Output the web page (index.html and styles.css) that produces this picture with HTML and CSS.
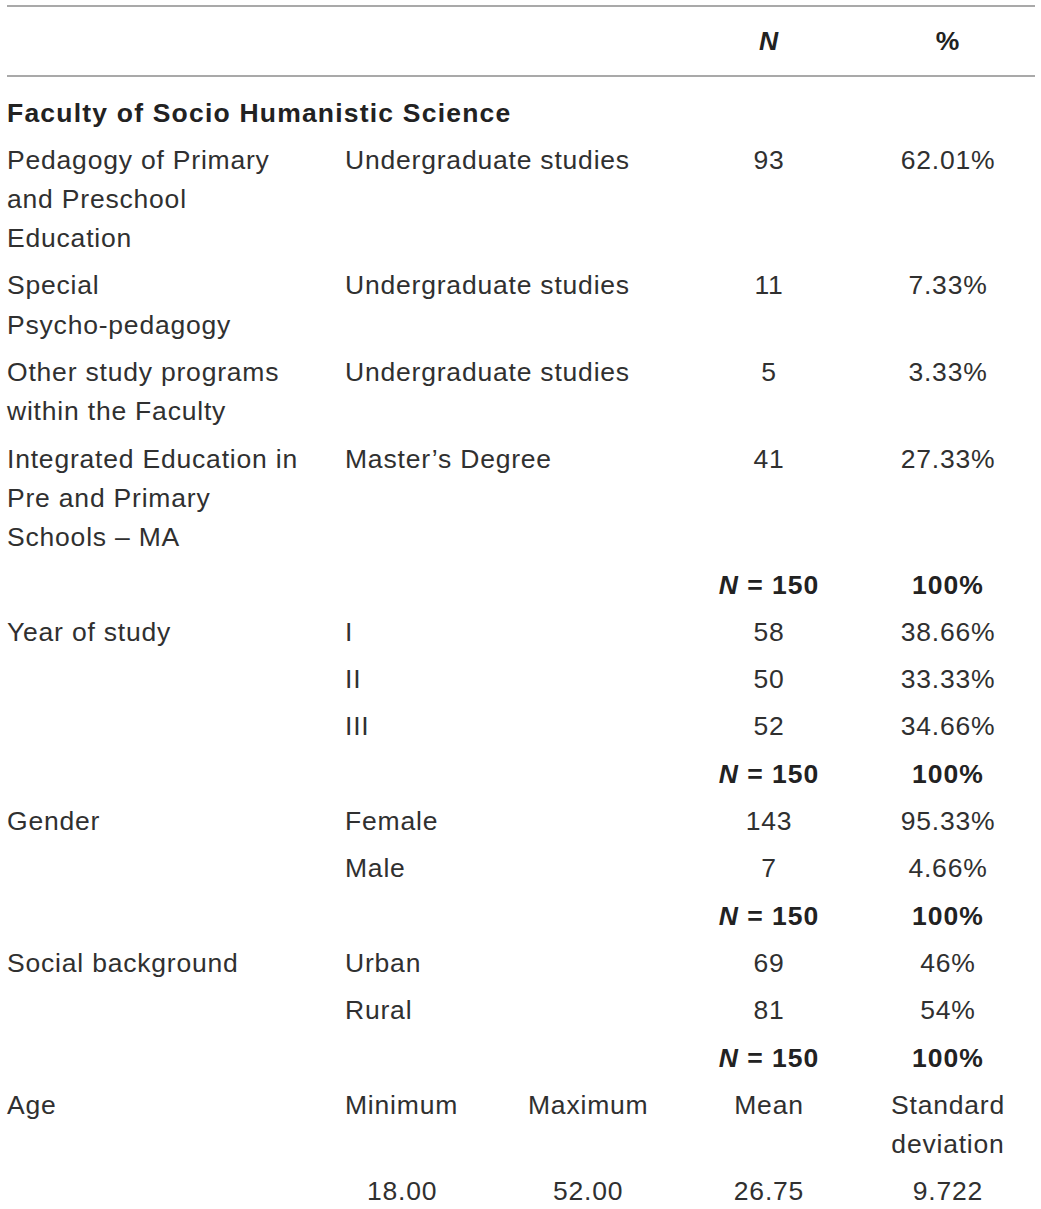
FILE: index.html
```html
<!DOCTYPE html>
<html lang="en">
<head>
<meta charset="utf-8">
<title>Sample characteristics</title>
<link rel="stylesheet" href="styles.css">
</head>
<body>
<div class="wrap">
<table class="stats">
  <colgroup>
    <col class="c1"><col class="c2"><col class="c3"><col class="c4"><col class="c5">
  </colgroup>
  <thead>
    <tr class="head">
      <th></th><th></th><th></th>
      <th class="num"><i>N</i></th>
      <th class="num">%</th>
    </tr>
  </thead>
  <tbody>
    <tr class="faculty">
      <td colspan="5" class="bold">Faculty of Socio Humanistic Science</td>
    </tr>
    <tr>
      <td>Pedagogy of Primary<br>and Preschool<br>Education</td>
      <td colspan="2">Undergraduate studies</td>
      <td class="num">93</td>
      <td class="num">62.01%</td>
    </tr>
    <tr>
      <td>Special<br>Psycho-pedagogy</td>
      <td colspan="2">Undergraduate studies</td>
      <td class="num">11</td>
      <td class="num">7.33%</td>
    </tr>
    <tr>
      <td>Other study programs<br>within the Faculty</td>
      <td colspan="2">Undergraduate studies</td>
      <td class="num">5</td>
      <td class="num">3.33%</td>
    </tr>
    <tr>
      <td>Integrated Education in<br>Pre and Primary<br>Schools – MA</td>
      <td colspan="2">Master’s Degree</td>
      <td class="num">41</td>
      <td class="num">27.33%</td>
    </tr>
    <tr class="total">
      <td></td><td></td><td></td>
      <td class="num bold"><i>N</i> = 150</td>
      <td class="num bold">100%</td>
    </tr>
    <tr>
      <td>Year of study</td><td>I</td><td></td>
      <td class="num">58</td><td class="num">38.66%</td>
    </tr>
    <tr>
      <td></td><td>II</td><td></td>
      <td class="num">50</td><td class="num">33.33%</td>
    </tr>
    <tr>
      <td></td><td>III</td><td></td>
      <td class="num">52</td><td class="num">34.66%</td>
    </tr>
    <tr class="total">
      <td></td><td></td><td></td>
      <td class="num bold"><i>N</i> = 150</td>
      <td class="num bold">100%</td>
    </tr>
    <tr>
      <td>Gender</td><td>Female</td><td></td>
      <td class="num">143</td><td class="num">95.33%</td>
    </tr>
    <tr>
      <td></td><td>Male</td><td></td>
      <td class="num">7</td><td class="num">4.66%</td>
    </tr>
    <tr class="total">
      <td></td><td></td><td></td>
      <td class="num bold"><i>N</i> = 150</td>
      <td class="num bold">100%</td>
    </tr>
    <tr>
      <td>Social background</td><td>Urban</td><td></td>
      <td class="num">69</td><td class="num">46%</td>
    </tr>
    <tr>
      <td></td><td>Rural</td><td></td>
      <td class="num">81</td><td class="num">54%</td>
    </tr>
    <tr class="total">
      <td></td><td></td><td></td>
      <td class="num bold"><i>N</i> = 150</td>
      <td class="num bold">100%</td>
    </tr>
    <tr>
      <td>Age</td><td>Minimum</td><td>Maximum</td>
      <td class="num">Mean</td><td class="num">Standard<br>deviation</td>
    </tr>
    <tr>
      <td></td><td class="min-val">18.00</td><td class="max-val">52.00</td>
      <td class="num">26.75</td><td class="num">9.722</td>
    </tr>
  </tbody>
</table>
</div>
</body>
</html>
```
FILE: styles.css
```css
html, body {
  margin: 0;
  padding: 0;
  background: #ffffff;
}

.wrap {
  padding: 5px 6px 0 7px;
}

.stats {
  width: 1028px;
  border-collapse: collapse;
  table-layout: fixed;
  font-family: "Liberation Sans", Arial, sans-serif;
  font-size: 26.5px;
  letter-spacing: 0.8px;
  line-height: 39.3px;
  color: #303030;
}

.c1 { width: 338px; }
.c2 { width: 183px; }
.c3 { width: 152px; }
.c4 { width: 178px; }
.c5 { width: 177px; }

.stats th,
.stats td {
  padding: 4px 0;
  text-align: left;
  vertical-align: top;
  white-space: nowrap;
  font-weight: normal;
}

.stats thead th {
  border-top: 2px solid #a9a9a9;
  border-bottom: 2px solid #a9a9a9;
  padding: 15px 0 14px;
  font-weight: bold;
  color: #222222;
}

.stats .num {
  text-align: center;
}

.stats td.num:last-child,
.stats th.num:last-child {
  padding-left: 3px;
}

.stats .bold {
  font-weight: bold;
  color: #222222;
}

.stats .total td {
  letter-spacing: 1px;
}

.stats .faculty td {
  padding-top: 17px;
  padding-bottom: 3px;
  font-size: 26.5px;
  letter-spacing: 1.2px;
}

.stats .min-val {
  padding-left: 22px;
}

.stats .max-val {
  padding-left: 25px;
}
```
